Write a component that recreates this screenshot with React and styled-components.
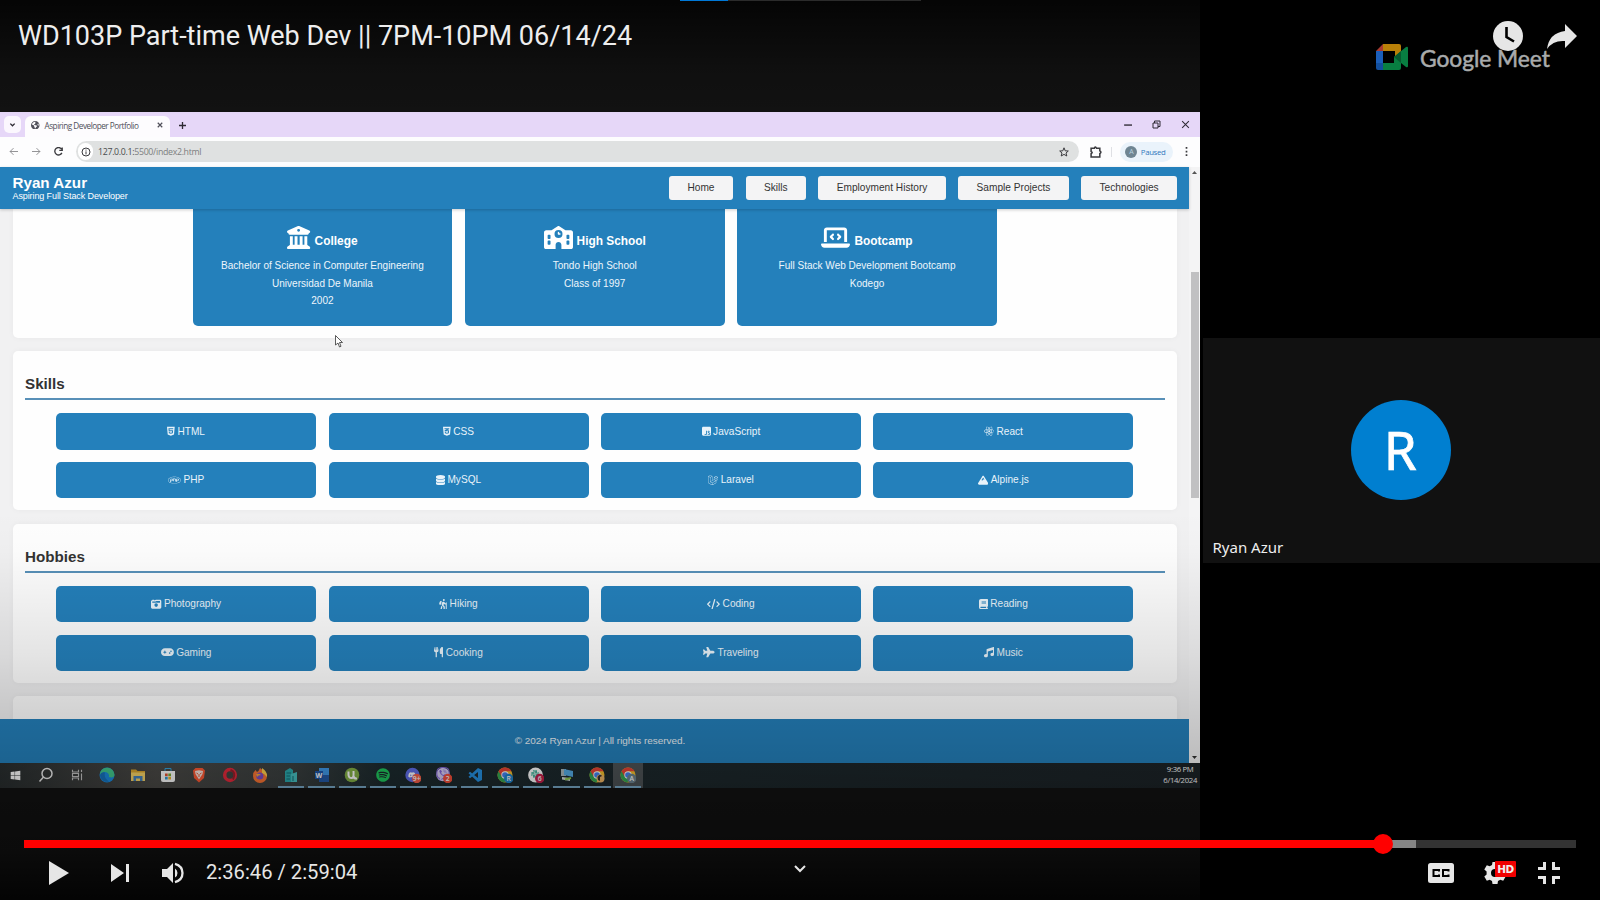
import React from "react";
import styled, { createGlobalStyle } from "styled-components";
import {
  FaBuildingColumns, FaSchool, FaLaptopCode, FaHtml5, FaCss3Alt, FaSquareJs, FaReact, FaPhp, FaDatabase,
  FaLaravel, FaMountain, FaCameraRetro, FaPersonHiking, FaCode, FaBook, FaGamepad, FaUtensils, FaPlane, FaMusic,
  FaEarthAmericas, FaWindows, FaSlack, FaSpotify, FaDiscord, FaViber,
} from "react-icons/fa6";

const Global = createGlobalStyle`
  * { box-sizing: border-box; }
  body { margin: 0; background: #000; overflow: hidden; }
  svg { display: block; flex: none; }
`;

const Player = styled.div`
  position: relative;
  width: 1600px;
  height: 900px;
  overflow: hidden;
  background: #000;
  font-family: Roboto, sans-serif;
`;
const Video = styled.div`
  display: grid;
  grid-template-columns: 1200px 400px;
  height: 900px;
`;
const Share = styled.div`
  background: #121212;
  padding-top: 112px;
`;
const Desktop = styled.div`
  height: 675.5px;
  display: flex;
  flex-direction: column;
  overflow: hidden;
  font-family: "Liberation Sans", Arial, sans-serif;
`;

/* Browser chrome */
const TabStrip = styled.div`
  height: 25px;
  background: #e6d7f8;
  display: flex;
  align-items: flex-end;
  color: #2d2933;
`;
const TabSearch = styled.div`
  width: 17px;
  height: 17px;
  margin: 0 4px 4px 4px;
  border-radius: 5px;
  background: #fbf7fe;
  display: grid;
  place-items: center;
`;
const Tab = styled.div`
  width: 145px;
  height: 21px;
  border-radius: 6px 6px 0 0;
  background: #fdfcfe;
  display: flex;
  align-items: center;
  padding: 0 7px 3px 6px;
  color: #50505a;
`;
const TabTitle = styled.span`
  font: 8.2px "Open Sans", sans-serif;
  letter-spacing: -0.48px;
  margin-left: 5px;
  flex: 1;
  white-space: nowrap;
`;
const NewTab = styled.div`
  margin: 0 auto 8px 9px;
`;
const WindowButtons = styled.div`
  display: flex;
  gap: 20px;
  margin: 0 10px 8px 0;
`;
const Toolbar = styled.div`
  height: 29.5px;
  background: #fdfdfe;
  display: flex;
  align-items: center;
  padding: 0 9px 0 9px;
  color: #3a3a3e;
`;
const NavIcons = styled.div`
  display: flex;
  gap: 13.5px;
  width: 67px;
`;
const Faded = styled.span`
  color: #77777b;
`;
const Omnibox = styled.div`
  width: 1003px;
  height: 21px;
  border-radius: 11px;
  background: #dfe1e1;
  display: flex;
  align-items: center;
  padding: 0 10px 0 2px;
`;
const SiteInfo = styled.div`
  width: 15px;
  height: 17px;
  border-radius: 8px;
  background: #fff;
  display: grid;
  place-items: center;
`;
const Address = styled.span`
  font: 8.8px "Open Sans", sans-serif;
  letter-spacing: -0.32px;
  margin-left: 5px;
  flex: 1;
  color: #7d7f80;
  b { font-weight: 400; color: #4a4c4d; }
`;
const ToolbarEnd = styled.div`
  flex: 1;
  display: flex;
  align-items: center;
  justify-content: space-between;
  padding-left: 11px;
`;
const Divider = styled.i`
  width: 1px;
  height: 10px;
  background: #dfe0e4;
`;
const Profile = styled.div`
  width: 53px;
  height: 20px;
  border-radius: 10px;
  background: #eaf3fb;
  color: #3078bd;
  display: flex;
  align-items: center;
  gap: 3.5px;
  padding-left: 5px;
  font: 7.8px "Open Sans", sans-serif;
  letter-spacing: -0.35px;
`;
const ProfileDot = styled.span`
  width: 12px;
  height: 12px;
  border-radius: 50%;
  background: #6f8592;
  color: #b7d3e0;
  font-size: 7px;
  line-height: 12px;
  text-align: center;
`;

/* Portfolio page */
const PageRow = styled.div`
  height: 596px;
  display: flex;
`;
const Page = styled.div`
  width: 1189px;
  display: flex;
  flex-direction: column;
  background: #f1f1f2;
`;
const Header = styled.header`
  height: 42.5px;
  background: #2480bb;
  color: #fff;
  display: flex;
  justify-content: space-between;
  align-items: center;
  padding: 0 12px;
  box-shadow: 0 1px 3px rgba(0, 0, 0, 0.2);
  z-index: 1;
  flex: none;
`;
const Brand = styled.div`
  font-size: 9px;
  line-height: 12px;
  padding: 2px 0 0 0.5px;
  letter-spacing: -0.1px;
  strong { display: block; font-size: 15.2px; line-height: 15px; letter-spacing: 0; }
`;
const Nav = styled.nav`
  display: flex;
  gap: 12.3px;
`;
const NavLink = styled.span`
  height: 24px;
  width: ${(p) => p.$w}px;
  border-radius: 3px;
  background: #f4f4f5;
  color: #333;
  font-size: 10.15px;
  line-height: 24px;
  text-align: center;
  white-space: nowrap;
`;
const Sections = styled.main`
  height: 510px;
  overflow: hidden;
  padding: 0 12px 0 12.5px;
  display: flex;
  flex-direction: column;
  gap: 13.4px;
`;
const Section = styled.section`
  height: ${(p) => p.$h}px;
  flex: none;
  border-radius: ${(p) => (p.$first ? "0 0 5px 5px" : "5px")};
  background: #fefefe;
  box-shadow: 0 0 6px rgba(0, 0, 0, 0.04);
  padding: 0 12.5px;
`;
const Schools = styled.div`
  display: flex;
  justify-content: center;
  gap: 12.5px;
`;
const School = styled.div`
  width: 259.8px;
  height: 116.8px;
  border-radius: 0 0 5px 5px;
  background: #2480bb;
  color: #eef6fb;
  display: flex;
  flex-direction: column;
  align-items: center;
  padding-top: 16.5px;
  font-size: 10.02px;
  line-height: 17.5px;
`;
const SchoolName = styled.div`
  display: flex;
  gap: 4px;
  height: 31.7px;
  color: #fff;
  font-size: 11.9px;
  font-weight: 700;
  span { padding-top: 7.5px; }
`;
const Heading = styled.h2`
  margin: 0 0 12.8px;
  height: 49.3px;
  padding-top: 23px;
  border-bottom: 2px solid #5890b8;
  color: #333;
  font-size: 15.2px;
  line-height: 19px;
`;
const TileGrid = styled.div`
  display: grid;
  grid-template-columns: repeat(4, 260px);
  grid-auto-rows: 36.3px;
  gap: 12.4px;
  padding-left: 31.2px;
`;
const Tile = styled.div`
  border-radius: 5px;
  background: #2480bb;
  color: #e9f3fa;
  display: flex;
  align-items: center;
  justify-content: center;
  gap: 2.4px;
  font-size: 10.1px;
  padding-bottom: 0.5px;
`;
const Sized = styled.span`
  svg { height: ${(p) => p.$h}px; width: ${(p) => (p.$h * p.$vb) / 512}px; }
`;
const Footer = styled.footer`
  flex: 1;
  background: #2480bb;
  color: #eef6fb;
  text-align: center;
  font-size: 9.95px;
  line-height: 43px;
  padding-left: 11px;
`;
const Scrollbar = styled.div`
  width: 11px;
  background: #f4f4f5;
  display: flex;
  flex-direction: column;
  align-items: center;
  justify-content: space-between;
  padding: 4px 0;
`;
const Thumb = styled.div`
  width: 8px;
  height: 226px;
  margin: -160px 0 0;
  background: #c0c0c2;
`;

/* Taskbar */
const Taskbar = styled.div`
  height: 25px;
  background: linear-gradient(90deg, #292e2f, #4a4946 13%, #3b4040 24%, #1c2a2e 32%, #1c2327);
  display: flex;
  justify-content: space-between;
`;
const Apps = styled.div`
  display: flex;
`;
const TaskbarApp = styled.div`
  width: 30.63px;
  display: flex;
  align-items: center;
  justify-content: center;
  border: solid transparent;
  border-width: 0 2.7px;
  border-color: ${(p) => (p.$active ? "#4d5356" : "transparent")};
  background: ${(p) => (p.$active ? "#4d5356" : "none")};
  box-shadow: ${(p) => (p.$open ? "inset 0 -2px #79aac9" : "none")};
`;
const Clock = styled.div`
  padding: 1px 3px 0 0;
  text-align: center;
  color: #fff;
  font: 7.7px/11px "Open Sans", sans-serif;
  letter-spacing: -0.3px;
`;

/* Meeting sidebar */
const Sidebar = styled.aside`
  display: flex;
  flex-direction: column;
`;
const MeetBrand = styled.div`
  height: 337.5px;
  padding: 43px 0 0 176px;
  display: flex;
  gap: 12px;
  color: #a9abac;
  white-space: nowrap;
`;
const MeetName = styled.span`
  font: 22.8px/30px Lato, sans-serif;
  letter-spacing: -0.05px;
  -webkit-text-stroke: 0.5px #a9abac;
`;
const Participant = styled.div`
  height: 225px;
  margin-left: 2.5px;
  background: #111;
  display: flex;
  flex-direction: column;
  align-items: center;
  padding: 62px 0 0;
`;
const Avatar = styled.div`
  width: 100px;
  height: 100px;
  border-radius: 50%;
  background: #007fd0;
  color: #fff;
  font: 400 53px/100px "Noto Sans", sans-serif;
  -webkit-text-stroke: 0.7px #fff;
  text-align: center;
  padding-right: 2px;
`;
const ParticipantName = styled.div`
  align-self: flex-start;
  margin: 37px 0 0 10px;
  color: #eee;
  font: 15px/20px "Noto Sans", sans-serif;
`;

/* Player overlay */
const Shade = styled.div`
  position: absolute;
  inset: 0 400px 0 0;
  background:
    linear-gradient(rgba(0,0,0,0.75), rgba(0,0,0,0.15) 70px, transparent 115px) top / 100% 115px no-repeat,
    linear-gradient(transparent, rgba(0,0,0,0.01) 40px, rgba(0,0,0,0.1) 145px, rgba(0,0,0,0.17) 200px, rgba(0,0,0,0.23) 255px, rgba(0,0,0,0.32) 300px, rgba(0,0,0,0.38) 340px, rgba(0,0,0,0.8) 390px) bottom / 100% 390px no-repeat;
`;
const Overlay = styled.div`
  position: absolute;
  inset: 0;
  display: flex;
  flex-direction: column;
  color: #e6e6e6;
`;
const LoadBar = styled.div`
  height: 1px;
  width: 241px;
  margin-left: 680px;
  background: linear-gradient(90deg, #0078d7 48px, #2b2b2b 48px);
`;
const TitleBar = styled.div`
  display: flex;
  align-items: center;
  height: 70px;
  padding: 0 23px 0 18px;
  flex: none;
`;
const Title = styled.h1`
  margin: 0;
  flex: 1;
  color: #eee;
  font-size: 27px;
  font-weight: 400;
`;
const TopActions = styled.div`
  display: flex;
  gap: 24px;
  align-items: center;
`;
const Progress = styled.div`
  margin: auto 24px 0;
  height: 8px;
  background: linear-gradient(90deg, #f00 1359px, #858585 1359px, #858585 1392px, #333 1392px);
  padding-left: 1349px;
  flex: none;
`;
const Knob = styled.div`
  width: 20px;
  height: 20px;
  margin-top: -6px;
  border-radius: 50%;
  background: #f00;
`;
const Controls = styled.div`
  height: 52px;
  display: grid;
  grid-template-columns: 1fr auto 1fr;
  align-items: center;
  padding: 0 40px 2px;
  flex: none;
`;
const Group = styled.div`
  display: flex;
  align-items: center;
  padding-left: 9px;
  justify-content: ${(p) => (p.$end ? "flex-end" : "flex-start")};
`;
const Expand = styled.div`
  padding-bottom: 8px;
`;
const Time = styled.span`
  margin-left: 22px;
  font-size: 20.2px;
  line-height: 24px;
  padding-bottom: 2px;
`;
const Gap = styled.i`
  width: ${(p) => p.$w}px;
`;
const Settings = styled.div`
  position: relative;
  width: 33px;
`;
const HdBadge = styled.span`
  position: absolute;
  left: 11px;
  top: -1px;
  width: 21px;
  height: 16px;
  border-radius: 1px;
  background: #f00000;
  color: #eee;
  font: 700 10.5px/17px "DejaVu Sans", sans-serif;
  text-align: center;
  letter-spacing: -0.4px;
`;
const Pointer = styled.svg`
  position: absolute;
  left: 335px;
  top: 335px;
`;

const navLinks = [["Home", 64.5], ["Skills", 60.5], ["Employment History", 127.5], ["Sample Projects", 110.7], ["Technologies", 95.9]];
const schools = [
  [FaBuildingColumns, 512, "College", ["Bachelor of Science in Computer Engineering", "Universidad De Manila", "2002"]],
  [FaSchool, 640, "High School", ["Tondo High School", "Class of 1997"]],
  [FaLaptopCode, 640, "Bootcamp", ["Full Stack Web Development Bootcamp", "Kodego"]],
];
const skills = [
  [FaHtml5, 384, "HTML"], [FaCss3Alt, 384, "CSS"], [FaSquareJs, 448, "JavaScript"], [FaReact, 512, "React"],
  [FaPhp, 640, "PHP"], [FaDatabase, 448, "MySQL"], [FaLaravel, 512, "Laravel"], [FaMountain, 512, "Alpine.js"],
];
const hobbies = [
  [FaCameraRetro, 512, "Photography"], [FaPersonHiking, 384, "Hiking"], [FaCode, 640, "Coding"], [FaBook, 448, "Reading"],
  [FaGamepad, 640, "Gaming"], [FaUtensils, 448, "Cooking"], [FaPlane, 576, "Traveling"], [FaMusic, 512, "Music"],
];

const Line = ({ d, size = 8, w = 1.2, box = 8 }) => (
  <svg width={size} height={size} viewBox={`0 0 ${box} ${box}`} fill="none" stroke="currentColor" strokeWidth={w}>
    <path d={d} />
  </svg>
);
const Glyph = ({ children, size = 16 }) => <svg width={size} height={size} viewBox="0 0 16 16">{children}</svg>;
const Badge = ({ fill, children }) => (
  <g>
    <circle cx="11.7" cy="11.5" r="4.7" fill={fill} />
    <text x="11.7" y="14" fontSize="6.8" fontWeight="600" fontFamily="Open Sans, sans-serif" textAnchor="middle" fill="#fff">{children}</text>
  </g>
);
const Chrome = ({ children }) => (
  <Glyph>
    <circle cx="8" cy="8" r="7.5" fill="#f6c02d" />
    <path d="M1.500 4.300A7.500 7.500 0 0 0 7.500 15.500L10 9z" fill="#34a853" />
    <path d="M8 4.300H14.600A7.500 7.500 0 0 0 1.500 4.300L4.900 10z" fill="#ea4335" />
    <circle cx="8" cy="8" r="3.7" fill="#fff" />
    <circle cx="8" cy="8" r="2.8" fill="#4285f4" />
    {children}
  </Glyph>
);

const pinned = [
  <FaWindows size={11} color="#fff" />,
  <Glyph><g fill="none" stroke="#eee" strokeWidth="1.500"><circle cx="9" cy="6.500" r="5" /><path d="M5.500 10L1.500 14.500" /></g></Glyph>,
  <Glyph size={12}><g fill="none" stroke="#c4c4c4" strokeWidth="1.500"><path d="M2 1V4H10V1M2 15V12H10V15M2 6H10V10H2zM14 1V4M14 6V15" /></g></Glyph>,
  <Glyph><circle cx="8" cy="8" r="7.500" fill="#1b8be0" /><path d="M1 6A7.400 7.400 0 0 1 15.500 8C15 11 11 11 9.800 9.600C11 7 8 4.500 5 5Q2 5.500 1 8z" fill="#42c98c" /><path d="M1 8Q2 4.500 6 5.500Q4.500 11 10 14.500A7 7 0 0 1 1 8z" fill="#1673bd" /></Glyph>,
  <Glyph><path d="M1 2.500H6L7.500 4H15V14H1z" fill="#dca72e" /><path d="M1 5.500H15V14H1z" fill="#f8d568" /><path d="M3.500 14V9H12.500V14H10V11.500H6V14z" fill="#4583bd" /></Glyph>,
  <Glyph><path d="M5 4V1.500H11V4" fill="none" stroke="#35a3dc" /><path d="M1 4H15V13Q15 15 13 15H3Q1 15 1 13z" fill="#fff" /><path d="M5 6.500H7.700V9.200H5z" fill="#e45430" /><path d="M8.300 6.500H11V9.200H8.300z" fill="#78ad33" /><path d="M5 9.800H7.700V12.500H5z" fill="#2f9bd4" /><path d="M8.300 9.800H11V12.500H8.300z" fill="#edb62f" /></Glyph>,
  <Glyph><path d="M4.500 1H11.500L14 3.500L13 11L8 15.500L3 11L2 3.500z" fill="#ff5a35" /><path d="M4 4L8 3.200L12 4L11.500 7L8 12.500L4.500 7z" fill="#f8e6e0" /><path d="M5.500 6L7 7M10.500 6L9 7M8 7V10" stroke="#ef5430" /></Glyph>,
  <Glyph><ellipse cx="8" cy="8" rx="5.300" ry="5.500" fill="none" stroke="#e52a3c" strokeWidth="3.500" /><path d="M8.500 3Q14.500 5 11 12.500" fill="none" stroke="#97202b" strokeWidth="2" /></Glyph>,
  <Glyph><path d="M8 1Q11 3 11 4Q15 5 15 9A7 7 0 0 1 1 9Q1 5 3.500 3L5 5Q7 4 8 1z" fill="#fb7534" /><path d="M10 1Q16 5 14.800 10Q13 7 10 6z" fill="#ffd04b" /><circle cx="7.800" cy="9" r="3.600" fill="#7c4ec4" /><path d="M4 7Q7 6 9 8Q6 8 5 10z" fill="#f7a737" /></Glyph>,
];
const running = [
  <Glyph><path d="M2 4L7 1L10 3V15H2z" fill="#2ba9ad" /><path d="M8 7L14 5V15H8z" fill="#48c1c2" /><path d="M3.500 6H8M3.500 9H7M3.500 12H7M10 9V14" stroke="#126c76" /></Glyph>,
  <Glyph><path d="M5 1H15V15H5z" fill="#3f98e8" /><path d="M5 8H15V15H5z" fill="#235aa8" /><path d="M1 4H9V12H1z" fill="#1d56a8" /><text x="5" y="10.500" fontSize="7" fontWeight="700" fontFamily="Open Sans, sans-serif" textAnchor="middle" fill="#fff">W</text></Glyph>,
  <Glyph><circle cx="8" cy="8" r="7.300" fill="#84b046" /><path d="M4.500 4.500V8Q5 11.500 8 11Q10 10.500 9.500 4M9.500 9Q10 12 13 11.500" fill="none" stroke="#fff" strokeWidth="2" /></Glyph>,
  <FaSpotify size={14} color="#20c95e" />,
  <Glyph><circle cx="7.500" cy="8" r="7.200" fill="#606eea" /><g transform="translate(3 4)"><FaDiscord size={8} color="#fff" /></g><Badge fill="#f65d49">9+</Badge></Glyph>,
  <Glyph><circle cx="7" cy="7.500" r="6.800" fill="#d8cef5" /><FaViber size={14} color="#8567dc" /><Badge fill="#f6503a">2</Badge></Glyph>,
  <Glyph><path d="M11 1L15 3V13L11 15L1.500 6.200L3 4.700L11 11V5L3 11.300L1.500 9.800z" fill="#2591e2" /></Glyph>,
  <Chrome><Badge fill="#1f85cc">R</Badge></Chrome>,
  <Glyph><circle cx="7.500" cy="8" r="7.400" fill="#fff" /><g transform="translate(2.500 2.500)"><FaSlack size={9} color="#2aa98f" /></g><Badge fill="#c51f4c">6</Badge></Glyph>,
  <Glyph><path d="M2 2H7V9H2z" fill="#a9b7bb" /><path d="M5 2L14 4V10L5 8z" fill="#55ace6" /><path d="M3 10L11 11V14L3 12.500z" fill="#d4dcda" /><path d="M6 12.500L12 11" stroke="#8fc94b" strokeWidth="2" /></Glyph>,
  <Chrome><circle cx="11.500" cy="11.500" r="4" fill="#f2b866" /><path d="M8.500 10Q11 6 13 9L11 10V14L9 13z" fill="#38312e" /></Chrome>,
  <Chrome><Badge fill="#6d8491">A</Badge></Chrome>,
];

function Tiles({ title, items }) {
  return (
    <Section $h={159.2}>
      <Heading>{title}</Heading>
      <TileGrid>
        {items.map(([Icon, vb, name]) => <Tile key={name}><Sized $h={10.3} $vb={vb}><Icon /></Sized>{name}</Tile>)}
      </TileGrid>
    </Section>
  );
}

function Browser() {
  return (
    <>
      <TabStrip>
        <TabSearch><Line d="M1.500 3L4 5.500L6.500 3" size={7} w={1.500} /></TabSearch>
        <Tab>
          <FaEarthAmericas size={8.500} />
          <TabTitle>Aspiring Developer Portfolio</TabTitle>
          <Line d="M1 1L7 7M7 1L1 7" size={6} w={1.600} />
        </Tab>
        <NewTab><Line d="M4 0V8M0 4H8" size={7} w={1.500} /></NewTab>
        <WindowButtons>
          <Line d="M1 4.500H8" size={9} /><Line d="M1 3H6V8H1zM2.500 3V1H8V6.500H6" size={9} box={9} w={1} /><Line d="M1 1L7 7M7 1L1 7" size={9} w={0.900} />
        </WindowButtons>
      </TabStrip>
      <Toolbar>
        <NavIcons>
          <Faded><Line d="M8 4H1M4 1L1 4L4 7" size={9} w={0.700} /></Faded>
          <Faded><Line d="M0 4H7M4 1L7 4L4 7" size={9} w={0.700} /></Faded>
          <Line d="M6.800 2A3.300 3.300 0 1 0 7 5.200M7.300 0.500V3H4.700" size={9} />
        </NavIcons>
        <Omnibox>
          <SiteInfo><svg width="10" height="10" viewBox="0 0 10 10"><path d="M5 1A4 4 0 1 0 5 9A4 4 0 1 0 5 1M5 2.600V3.600M5 4.400V7.400" fill="none" stroke="#3a3a3e" /></svg></SiteInfo>
          <Address><b>127.0.0.1:</b>5500/index2.html</Address>
          <Line d="M5 0.800L6.200 3.800L9.300 4L7 6L7.800 9L5 7.400L2.200 9L3 6L0.700 4L3.800 3.800z" box={10} size={10} w={1} />
        </Omnibox>
        <ToolbarEnd>
          <Line d="M1 2H4Q4.500 0 6 2H9V4.500Q11 5.500 9 7V10H1V7Q3 6 1 5z" box={11} size={12} w={1.400} />
          <Divider />
          <Profile><ProfileDot>A</ProfileDot>Paused</Profile>
          <Line d="M4 0V1.500M4 3.300V4.800M4 6.500V8" size={9} w={1.500} />
        </ToolbarEnd>
      </Toolbar>
      <PageRow>
        <Page>
          <Header>
            <Brand><strong>Ryan Azur</strong>Aspiring Full Stack Developer</Brand>
            <Nav>{navLinks.map(([name, w]) => <NavLink key={name} $w={w}>{name}</NavLink>)}</Nav>
          </Header>
          <Sections>
            <Section $h={128.8} $first>
              <Schools>
                {schools.map(([Icon, vb, name, lines]) => (
                  <School key={name}>
                    <SchoolName><Sized as="i" $h={23.2} $vb={vb}><Icon /></Sized><span>{name}</span></SchoolName>
                    {lines.map((t) => <div key={t}>{t}</div>)}
                  </School>
                ))}
              </Schools>
            </Section>
            <Tiles title="Skills" items={skills} />
            <Tiles title="Hobbies" items={hobbies} />
            <Section $h={60} />
          </Sections>
          <Footer>© 2024 Ryan Azur | All rights reserved.</Footer>
        </Page>
        <Scrollbar>
          <svg width="5" height="3"><path d="M0 3L2.500 0L5 3z" fill="#555" /></svg>
          <Thumb />
          <svg width="5" height="3"><path d="M0 0L2.500 3L5 0z" fill="#333" /></svg>
        </Scrollbar>
      </PageRow>
    </>
  );
}

export default function App() {
  return (
    <Player>
      <Global />
      <Video>
        <Share>
          <Desktop>
            <Browser />
            <Taskbar>
              <Apps>
                {pinned.map((icon, i) => <TaskbarApp key={i}>{icon}</TaskbarApp>)}
                {running.map((icon, i) => <TaskbarApp key={i} $open $active={i === 11}>{icon}</TaskbarApp>)}
              </Apps>
              <Clock>9:36 PM<br />6/14/2024</Clock>
            </Taskbar>
          </Desktop>
        </Share>
        <Sidebar>
          <MeetBrand>
            <svg width="32" height="28" viewBox="0 0 32 28">
              <path d="M0 8L7 1V8z" fill="#a83b31" />
              <path d="M7 1H23Q25 1 25 3V10L19 15V8H7z" fill="#b98008" />
              <path d="M0 8H7V20H0z" fill="#1b5eb9" />
              <path d="M0 20H7V27H2Q0 27 0 25z" fill="#124f9e" />
              <path d="M7 20H18V14L25 10V25Q25 27 23 27H7z" fill="#087e41" />
              <path d="M18 14L30 4Q32 3 32 5V23Q32 25 30 24L25 20z" fill="#087e41" />
              <path d="M18 14L25 8V20z" fill="#075b30" />
            </svg>
            <MeetName>Google Meet</MeetName>
          </MeetBrand>
          <Participant>
            <Avatar>R</Avatar>
            <ParticipantName>Ryan Azur</ParticipantName>
          </Participant>
        </Sidebar>
      </Video>
      <Pointer width="8" height="13" viewBox="0 0 8 13"><path d="M0.500 0.500V10L3 8L4.500 12L6 11.300L4.500 7.500H7.500z" fill="#fff" stroke="#333" strokeWidth="0.800" /></Pointer>
      <Shade />
      <Overlay>
        <LoadBar />
        <TitleBar>
          <Title>WD103P Part-time Web Dev || 7PM-10PM 06/14/24</Title>
          <TopActions>
            <svg width="30" height="30" viewBox="0 0 30 30"><circle cx="15" cy="15" r="15" fill="#e6e6e6" /><path d="M13.500 6V16L21 20.500" fill="none" stroke="#000" strokeWidth="2.600" /></svg>
            <svg width="30" height="25" viewBox="0 0 30 25"><path d="M18 0L30 12L18 24V17Q6 16 0 25Q2 9 18 7z" fill="#e6e6e6" /></svg>
          </TopActions>
        </TitleBar>
        <Progress><Knob /></Progress>
        <Controls>
          <Group>
            <svg width="20" height="24"><path d="M0 0L20 12L0 24z" fill="#e6e6e6" /></svg>
            <Gap $w={42} />
            <svg width="18" height="18"><path d="M0 0L13 9L0 18zM15 0H18V18H15z" fill="#e6e6e6" /></svg>
            <Gap $w={33} />
            <svg width="22" height="22"><path d="M0 7H5L11 1V21L5 15H0zM13 6.500Q15.500 8 15.500 11T13 15.500z" fill="#e6e6e6" /><path d="M13 1.800Q20.500 4 20.500 11T13 20.200" fill="none" stroke="#e6e6e6" strokeWidth="2.300" /></svg>
            <Time>2:36:46 / 2:59:04</Time>
          </Group>
          <Expand>
            <svg width="12" height="8"><path d="M1 1L6 6L11 1" fill="none" stroke="#e6e6e6" strokeWidth="2" /></svg>
          </Expand>
          <Group $end>
            <svg width="26" height="20"><rect width="26" height="20" rx="2.500" fill="#e6e6e6" /><path d="M11 8.500V7H5.500V13H11V11.500M20.500 8.500V7H15V13H20.500V11.500" fill="none" stroke="#000" strokeWidth="2" /></svg>
            <Gap $w={30} />
            <Settings>
              <svg width="22" height="22" viewBox="0 0 22 22"><path fillRule="evenodd" fill="#e6e6e6" d="M8.500 0H13.500L14 3L16.300 4.300L19.200 3.200L21.700 7.500L19.400 9.500V12.500L21.700 14.500L19.200 18.800L16.300 17.700L14 19L13.500 22H8.500L8 19L5.700 17.700L2.800 18.800L0.300 14.500L2.600 12.500V9.500L0.300 7.500L2.800 3.200L5.700 4.300L8 3zM11 7A4 4 0 1 0 11 15A4 4 0 1 0 11 7z" /></svg>
              <HdBadge>HD</HdBadge>
            </Settings>
            <Gap $w={21} />
            <svg width="22" height="22"><path d="M0 6.500H6.500V0M15.500 0V6.500H22M0 15.500H6.500V22M15.500 22V15.500H22" fill="none" stroke="#e6e6e6" strokeWidth="3" /></svg>
          </Group>
        </Controls>
      </Overlay>
    </Player>
  );
}
